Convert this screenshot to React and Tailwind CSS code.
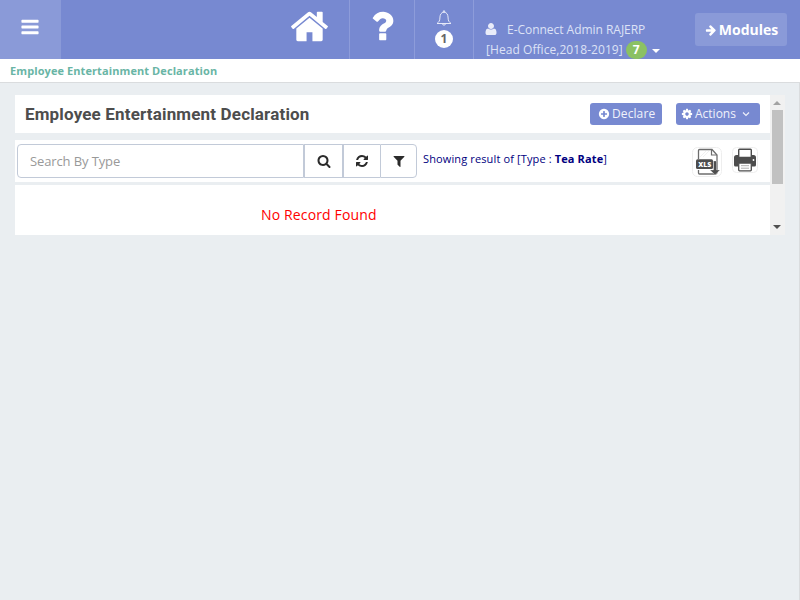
import React from "react";

const ICONS = {
  bars: "M1664 1344v128q0 26-19 45t-45 19h-1408q-26 0-45-19t-19-45v-128q0-26 19-45t45-19h1408q26 0 45 19t19 45zm0-512v128q0 26-19 45t-45 19h-1408q-26 0-45-19t-19-45v-128q0-26 19-45t45-19h1408q26 0 45 19t19 45zm0-512v128q0 26-19 45t-45 19h-1408q-26 0-45-19t-19-45v-128q0-26 19-45t45-19h1408q26 0 45 19t19 45z",
  home: "M1472 992v480q0 26-19 45t-45 19h-384v-384h-256v384h-384q-26 0-45-19t-19-45v-480q0-1 .5-3t.5-3l575-474 575 474q1 2 1 6zm223-69l-62 74q-8 9-21 11h-3q-13 0-21-7l-692-577-692 577q-12 8-24 7-13-2-21-11l-62-74q-8-10-7-23.5t11-21.5l719-599q32-26 76-26t76 26l244 204v-195q0-14 9-23t23-9h192q14 0 23 9t9 23v408l219 182q10 8 11 21.5t-7 23.5z",
  question: "M1088 1256v240q0 16-12 28t-28 12h-240q-16 0-28-12t-12-28v-240q0-16 12-28t28-12h240q16 0 28 12t12 28zm316-600q0 54-15.5 101t-35 76.5-55 59.5-57.5 43.5-61 35.5q-41 23-68.5 65t-27.5 67q0 17-12 32.5t-28 15.5h-240q-15 0-25.5-18.5t-10.5-37.5v-45q0-83 65-156.5t143-108.5q59-27 84-56t25-76q0-42-46.5-74t-107.5-32q-65 0-108 29-35 25-107 115-13 16-31 16-12 0-25-8l-164-125q-13-10-15.5-25t5.500-28q160-266 464-266 80 0 161 31t146 83 106 127.5 41 158.5z",
  user: "M1600 1405q0 120-73 189.5t-194 69.5h-874q-121 0-194-69.5t-73-189.5q0-53 3.5-103.5t14-109 26.5-108.5 43-97.5 62-81 85.5-53.5 111.5-20q9 0 42 21.5t74.5 48 108 48 133.5 21.5 133.5-21.5 108-48 74.5-48 42-21.5q61 0 111.5 20t85.5 53.5 62 81 43 97.5 26.5 108.5 14 109 3.5 103.5zm-320-893q0 159-112.5 271.5t-271.5 112.5-271.5-112.5-112.5-271.5 112.5-271.5 271.5-112.5 271.5 112.5 112.5 271.5z",
  arrow: "M1600 960q0 54-37 91l-651 651q-39 37-91 37-51 0-90-37l-75-75q-38-38-38-91t38-91l293-293h-704q-52 0-84.5-37.5t-32.5-90.5v-128q0-53 32.5-90.5t84.5-37.5h704l-293-294q-38-36-38-90t38-90l75-75q38-38 90-38 53 0 91 38l651 651q37 35 37 90z",
  plus: "M1344 960v-128q0-26-19-45t-45-19h-256v-256q0-26-19-45t-45-19h-128q-26 0-45 19t-19 45v256h-256q-26 0-45 19t-19 45v128q0 26 19 45t45 19h256v256q0 26 19 45t45 19h128q26 0 45-19t19-45v-256h256q26 0 45-19t19-45zm320-64q0 209-103 385.5t-279.5 279.5-385.5 103-385.5-103-279.5-279.5-103-385.5 103-385.5 279.5-279.5 385.5-103 385.5 103 279.5 279.5 103 385.5z",
  cog: "M1152 896q0-106-75-181t-181-75-181 75-75 181 75 181 181 75 181-75 75-181zm512-109v222q0 12-8 23t-20 13l-185 28q-19 54-39 91 35 50 107 138 10 12 10 25t-9 23q-27 37-99 108t-94 71q-12 0-26-9l-138-108q-44 23-91 38-16 136-29 186-7 28-36 28h-222q-14 0-24.5-8.5t-11.5-21.5l-28-184q-49-16-90-37l-141 107q-10 9-25 9-14 0-25-11-126-114-165-168-7-10-7-23 0-12 8-23 15-21 51-66.5t54-70.5q-27-50-41-99l-183-27q-13-2-21-12.5t-8-23.5v-222q0-12 8-23t19-13l186-28q14-46 39-92-40-57-107-138-10-12-10-24 0-10 9-23 26-36 98.5-107.5t94.5-71.5q13 0 26 10l138 107q44-23 91-38 16-136 29-186 7-28 36-28h222q14 0 24.5 8.5t11.5 21.5l28 184q49 16 90 37l142-107q9-9 24-9 13 0 25 10 129 119 165 170 7 8 7 22 0 12-8 23-15 21-51 66.5t-54 70.5q26 50 41 98l183 28q13 2 21 12.5t8 23.5z",
  search: "M1216 832q0-185-131.5-316.5t-316.5-131.5-316.5 131.5-131.5 316.5 131.5 316.5 316.5 131.5 316.5-131.5 131.5-316.5zm512 832q0 52-38 90t-90 38q-54 0-90-38l-343-342q-179 124-399 124-143 0-273.5-55.5t-225-150-150-225-55.5-273.5 55.5-273.5 150-225 225-150 273.5-55.5 273.5 55.5 225 150 150 225 55.5 273.5q0 220-124 399l343 343q37 37 37 90z",
  refresh: "M1639 1056q0 5-1 7-64 268-268 434.5t-478 166.5q-146 0-282.5-55t-243.5-157l-129 129q-19 19-45 19t-45-19-19-45v-448q0-26 19-45t45-19h448q26 0 45 19t19 45-19 45l-137 137q71 66 161 102t187 36q134 0 250-65t186-179q11-17 53-117 8-23 30-23h192q13 0 22.5 9.5t9.5 22.5zm25-800v448q0 26-19 45t-45 19h-448q-26 0-45-19t-19-45 19-45l138-138q-148-137-349-137-134 0-250 65t-186 179q-11 17-53 117-8 23-30 23h-199q-13 0-22.5-9.5t-9.5-22.5v-7q65-268 270-434.5t480-166.5q146 0 284 55.5t245 156.5l130-129q19-19 45-19t45 19 19 45z",
  filter: "M1595 295q17 41-14 70l-493 493v742q0 42-39 59-13 5-25 5-27 0-45-19l-256-256q-19-19-19-45v-486l-493-493q-31-29-14-70 17-39 59-39h1280q42 0 59 39z",
};

function Icon({ name, className }) {
  return (
    <svg viewBox="0 0 1792 1792" fill="currentColor" className={"shrink-0 " + className}>
      <path d={ICONS[name]} />
    </svg>
  );
}

function BellIcon() {
  return (
    <svg viewBox="0 0 16 16" fill="none" stroke="currentColor" strokeWidth="1" className="h-4 w-4">
      <path d="M1 13.500c1.900-1.500 2.900-2.700 2.900-5.500 0-3.200 1.200-5.800 4.100-5.800s4.100 2.600 4.100 5.800c0 2.800 1 4 2.900 5.500z" strokeLinejoin="round" />
      <path d="M7.300 2.200V.9h1.400v1.300M6.300 13.700c.3 1.900 3.100 1.900 3.400 0" />
    </svg>
  );
}

function XlsIcon() {
  return (
    <svg viewBox="0 0 30 30" className="h-[30px] w-[30px]">
      <rect x=".5" y=".5" width="29" height="29" rx="5" fill="#fff" stroke="#eeeeee" />
      <path d="M6.500 12V3.500q0-1 1-1H20l5 5.500V25.500q0 1.500-1.500 1.500H7.500q-1 0-1-1V23" fill="none" stroke="#6d6d6d" strokeWidth="1.300" />
      <path d="M19.500 2.500V8H25" fill="none" stroke="#6d6d6d" strokeWidth="1.200" />
      <path d="M8 10l6-6M11 10l6-6" stroke="#ededed" strokeWidth=".8" />
      <rect x="4" y="12.300" width="17" height="9.700" rx="1.500" fill="#4d4d4d" />
      <path d="M21.500 14h3v9H28l-5 4.800-5-4.800h3.500z" fill="#4d4d4d" stroke="#fff" strokeWidth=".3" />
      <text x="6.200" y="19.700" fontSize="7" fontWeight="800" fill="#fff" textLength="13" lengthAdjust="spacingAndGlyphs" className="font-['Open_Sans',sans-serif]">XLS</text>
    </svg>
  );
}

function PrintIcon() {
  return (
    <svg viewBox="0 0 26 26" className="h-[26px] w-[26px]">
      <rect x=".5" y=".5" width="25" height="25" rx="4" fill="#fff" stroke="#eeeeee" />
      <path d="M4.500 8h17q2.500 0 2.500 2.500V18q0 1.500-1.500 1.500h-2.700V16H6.200v3.500H3.500Q2 19.500 2 18v-7.500Q2 8 4.500 8z" fill="#4d4d4d" />
      <path d="M6.700 10.500V3q0-.8.8-.8h11q.8 0 .8.800v7.500z" fill="#fff" stroke="#4d4d4d" strokeWidth="1.400" />
      <path d="M6.700 16.200h12.600V23q0 .8-.8.8h-11q-.8 0-.8-.8z" fill="#fff" stroke="#4d4d4d" strokeWidth="1.300" />
      <path d="M9 18.700h8M9 21.200h8" stroke="#a5a5a5" strokeWidth=".9" />
      <circle cx="21.500" cy="13" r=".9" fill="#fff" />
    </svg>
  );
}

function Header() {
  return (
    <header className="flex h-[59px] bg-[#7789d1] text-white">
      <button className="flex w-[61px] items-start justify-center bg-[#8a9ad8] pt-[17px] pr-0.5">
        <Icon name="bars" className="h-5 w-5" />
      </button>
      <div className="flex flex-1 justify-end border-r border-[#8d9cda] pt-1.5 pr-[19px]">
        <Icon name="home" className="h-[41px] w-[41px]" />
      </div>
      <div className="flex w-[65px] justify-center border-r border-[#8d9cda] pt-1.5">
        <Icon name="question" className="h-10 w-10" />
      </div>
      <div className="flex w-[59px] flex-col items-center border-r border-[#8d9cda] pt-2.5 text-[#e6e9f8]">
        <BellIcon />
        <span className="mt-1 h-[18px] w-[18px] rounded-full bg-white text-center text-[12px] leading-[18px] font-bold text-[#666]">1</span>
      </div>
      <div className="w-[221px] pt-5 pl-3 text-[12px] leading-5 text-[#dde2f6]">
        <div className="flex items-center">
          <Icon name="user" className="mb-0.5 -ml-0.5 h-3.5 w-3.5 text-[#e9ecf9]" />
          <span className="pl-[9px] tracking-[-0.03px] whitespace-nowrap">E-Connect Admin RAJERP</span>
        </div>
        <div className="flex items-center whitespace-nowrap">
          <span className="tracking-[0.06px]">[Head Office,2018-2019]</span>
          <span className="ml-[3px] h-[18px] w-[21px] rounded-full bg-[#8bc163] text-center leading-[18px] font-bold text-white">7</span>
          <span className="mt-[2px] ml-[5px] border-x-4 border-t-4 border-x-transparent border-t-white" />
        </div>
      </div>
      <button className="mt-[13px] mr-[13px] flex h-[33px] w-[92px] items-center justify-center gap-0.5 rounded-[3px] bg-[#8a9ad8] pl-px text-[14px] font-bold">
        <Icon name="arrow" className="h-3 w-3" />
        <span>Modules</span>
      </button>
    </header>
  );
}

function TitleBar() {
  return (
    <div className="flex h-[38px] items-center bg-white pr-2.5 pl-2.5">
      <h1 className="pt-px font-[Roboto,sans-serif] text-[17px] font-bold tracking-[0.165px] text-[#4d4d4d]">Employee Entertainment Declaration</h1>
      <button className="ml-auto flex h-[22px] w-[72px] items-center rounded-[3px] bg-[#7789d1] pl-2 text-[12px] leading-[22px] text-[#f0f2fb]">
        <Icon name="plus" className="h-3 w-3 text-white" />
        <span className="ml-0.5 tracking-[0.1px]">Declare</span>
      </button>
      <button className="ml-3.5 flex h-[22px] w-[84px] items-center rounded-[3px] bg-[#7789d1] pl-[5px] text-[12px] leading-[22px] text-[#f0f2fb]">
        <Icon name="cog" className="h-3 w-3 text-white" />
        <span className="ml-0.5">Actions</span>
        <svg viewBox="0 0 8 6" fill="none" stroke="currentColor" strokeWidth="1.1" className="ml-1.5 h-1.5 w-2">
          <path d="M1 1.500l3 3 3-3" />
        </svg>
      </button>
    </div>
  );
}

function Toolbar() {
  return (
    <div className="mt-[7px] flex h-[42px] bg-white pt-1 pl-0.5">
      <input
        placeholder="Search By Type"
        className="h-[34px] w-[287px] rounded-l-[4px] border border-[#c2cad8] px-3 text-[13px] tracking-[-0.12px] outline-none placeholder:text-[#999]"
      />
      <button className="flex h-[34px] w-[39px] items-center justify-center border border-[#c2cad8] text-[#2b2b2b]">
        <Icon name="search" className="h-3.5 w-3.5" />
      </button>
      <button className="flex h-[34px] w-[37px] items-center justify-center border border-r-0 border-[#c2cad8] text-[#2b2b2b]">
        <Icon name="refresh" className="h-3.5 w-3.5" />
      </button>
      <button className="flex h-[34px] w-[37px] items-center justify-center rounded-r-[4px] border border-[#c2cad8] text-[#2b2b2b]">
        <Icon name="filter" className="h-3.5 w-3.5" />
      </button>
      <span className="ml-1.5 pt-[7px] text-[11px] leading-4 tracking-[0.13px] text-[#000080]">
        Showing result of [Type : <b>Tea Rate</b>]
      </span>
      <div className="mr-3 ml-auto flex gap-2.5 pt-[3px]">
        <XlsIcon />
        <PrintIcon />
      </div>
    </div>
  );
}

function ScrollBar() {
  return (
    <div className="flex w-[15px] flex-col items-center bg-[#f1f1f1]">
      <span className="mt-1.5 mr-px border-x-4 border-b-4 border-x-transparent border-b-[#a3a3a3]" />
      <span className="mt-[5px] h-[74px] w-[11px] bg-[#c1c1c1]" />
      <span className="mt-auto mr-px mb-1.5 border-x-4 border-t-4 border-x-transparent border-t-[#505050]" />
    </div>
  );
}

export default function App() {
  return (
    <div className="h-[600px] w-[800px] overflow-hidden bg-[#eaeef1] font-['Open_Sans',sans-serif]">
      <Header />
      <nav className="h-6 border-b border-[#dadcde] bg-white pl-2.5 text-[11px] leading-6 font-bold tracking-[0.09px] text-[#69b5a5]">
        Employee Entertainment Declaration
      </nav>
      <div className="flex h-[517px] items-start border-r border-[#dadcde] pt-3 pl-[15px]">
        <main className="h-[140px] w-[755px]">
          <TitleBar />
          <Toolbar />
          <section className="mt-[3px] h-[50px] bg-white pt-5 pl-[246px] text-[14px] leading-5 tracking-[0.14px] text-[#ff0000]">
            No Record Found
          </section>
        </main>
        <div className="flex h-[140px]">
          <ScrollBar />
        </div>
      </div>
    </div>
  );
}
